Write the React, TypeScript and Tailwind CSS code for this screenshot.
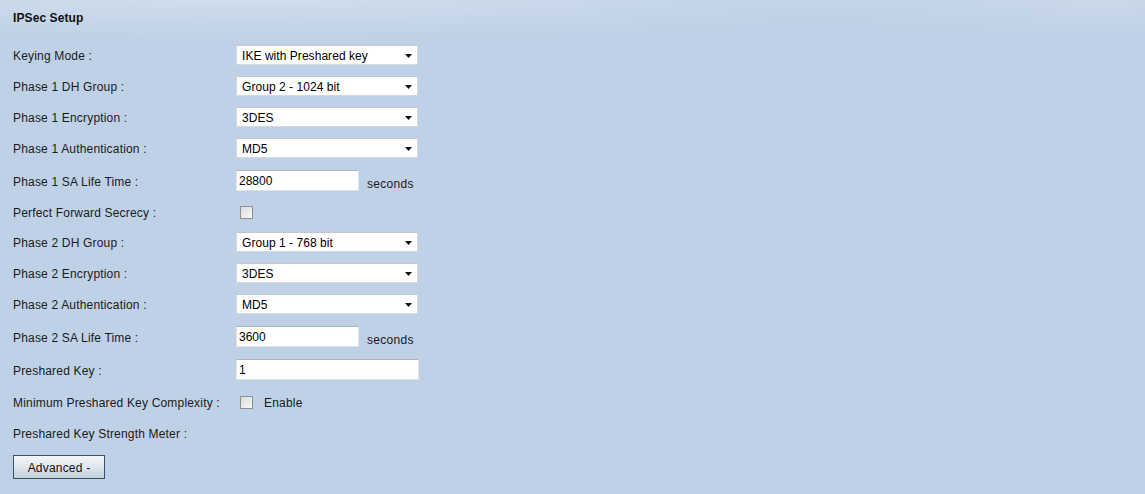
import React from "react";

const font = { fontFamily: '"Liberation Sans", Arial, sans-serif' };

function Select({ value }: { value: string }) {
  return (
    <div className="relative flex h-[20px] w-[182px] items-center border border-[#d4d8de] border-t-[#c4c8ce] bg-white pl-[5px] pt-[1px] text-[12px] tracking-[0.05px] text-black">
      <span>{value}</span>
      <svg className="absolute right-[5px] top-[8px]" width="7" height="4" viewBox="0 0 7 4">
        <path d="M0 0H7L3.5 4Z" fill="#111" />
      </svg>
    </div>
  );
}

function TextInput({ value, w }: { value: string; w: string }) {
  return (
    <div className={`flex h-[21px] ${w} items-center border border-[#dfe2e6] border-t-[#aeb3b9] bg-white pl-[2px] pt-[1px] text-[12px] text-black`}>
      {value}
    </div>
  );
}

function Checkbox() {
  return (
    <div className="h-[13px] w-[13px] border border-[#8e8f8f] bg-gradient-to-br from-[#dcdcdc] to-[#f7f7f7]" />
  );
}

function Row({ label, children, h, mt }: { label: string; children?: React.ReactNode; h: string; mt: string }) {
  return (
    <div className={`flex items-center ${h} ${mt}`}>
      <div className="w-[223px] shrink-0 pt-[2px] text-[12px] tracking-[0.18px] text-[#1a1a1a]">{label}</div>
      {children}
    </div>
  );
}

export default function App() {
  return (
    <div
      style={font}
      className="relative h-[494px] w-[1145px] overflow-hidden bg-[#bfd1e6]"
    >
      <div className="pointer-events-none absolute inset-0 bg-[radial-gradient(ellipse_700px_45px_at_250px_-5px,rgba(228,236,245,0.5),rgba(228,236,245,0))]" />
      <div className="pointer-events-none absolute inset-0 bg-[radial-gradient(ellipse_350px_35px_at_1100px_0px,rgba(215,226,238,0.45),rgba(215,226,238,0))]" />
      <div className="relative pl-[13px]">
        <div className="pt-[11px] text-[12px] font-bold leading-[14px] tracking-[0.1px] text-[#111]">IPSec Setup</div>
        <Row label="Keying Mode :" h="h-[20px]" mt="mt-[20px]">
          <Select value="IKE with Preshared key" />
        </Row>
        <Row label="Phase 1 DH Group :" h="h-[20px]" mt="mt-[11px]">
          <Select value="Group 2 - 1024 bit" />
        </Row>
        <Row label="Phase 1 Encryption :" h="h-[20px]" mt="mt-[11px]">
          <Select value="3DES" />
        </Row>
        <Row label="Phase 1 Authentication :" h="h-[20px]" mt="mt-[11px]">
          <Select value="MD5" />
        </Row>
        <Row label="Phase 1 SA Life Time :" h="h-[21px]" mt="mt-[12px]">
          <TextInput value="28800" w="w-[123px]" />
          <span className="ml-[8px] mt-[6px] text-[12px] tracking-[0.3px] text-[#1a1a1a]">seconds</span>
        </Row>
        <Row label="Perfect Forward Secrecy :" h="h-[20px]" mt="mt-[11px]">
          <div className="ml-[4px]">
            <Checkbox />
          </div>
        </Row>
        <Row label="Phase 2 DH Group :" h="h-[20px]" mt="mt-[10px]">
          <Select value="Group 1 - 768 bit" />
        </Row>
        <Row label="Phase 2 Encryption :" h="h-[20px]" mt="mt-[11px]">
          <Select value="3DES" />
        </Row>
        <Row label="Phase 2 Authentication :" h="h-[20px]" mt="mt-[11px]">
          <Select value="MD5" />
        </Row>
        <Row label="Phase 2 SA Life Time :" h="h-[21px]" mt="mt-[12px]">
          <TextInput value="3600" w="w-[123px]" />
          <span className="ml-[8px] mt-[6px] text-[12px] tracking-[0.3px] text-[#1a1a1a]">seconds</span>
        </Row>
        <Row label="Preshared Key :" h="h-[21px]" mt="mt-[12px]">
          <TextInput value="1" w="w-[183px]" />
        </Row>
        <Row label="Minimum Preshared Key Complexity :" h="h-[20px]" mt="mt-[12px]">
          <div className="ml-[4px] flex items-center">
            <Checkbox />
            <span className="ml-[11px] mt-[2px] text-[12px] tracking-[0.2px] text-[#1a1a1a]">Enable</span>
          </div>
        </Row>
        <Row label="Preshared Key Strength Meter :" h="h-[20px]" mt="mt-[11px]" />
        <button className="mt-[12px] flex h-[24px] w-[92px] items-center justify-center border border-[#3a5068] bg-gradient-to-b from-[#f4f7fa] via-[#dfe7ee] to-[#c3d0da] pt-[1px] text-[12px] tracking-[0.2px] text-[#111]">
          Advanced -
        </button>
      </div>
    </div>
  );
}
